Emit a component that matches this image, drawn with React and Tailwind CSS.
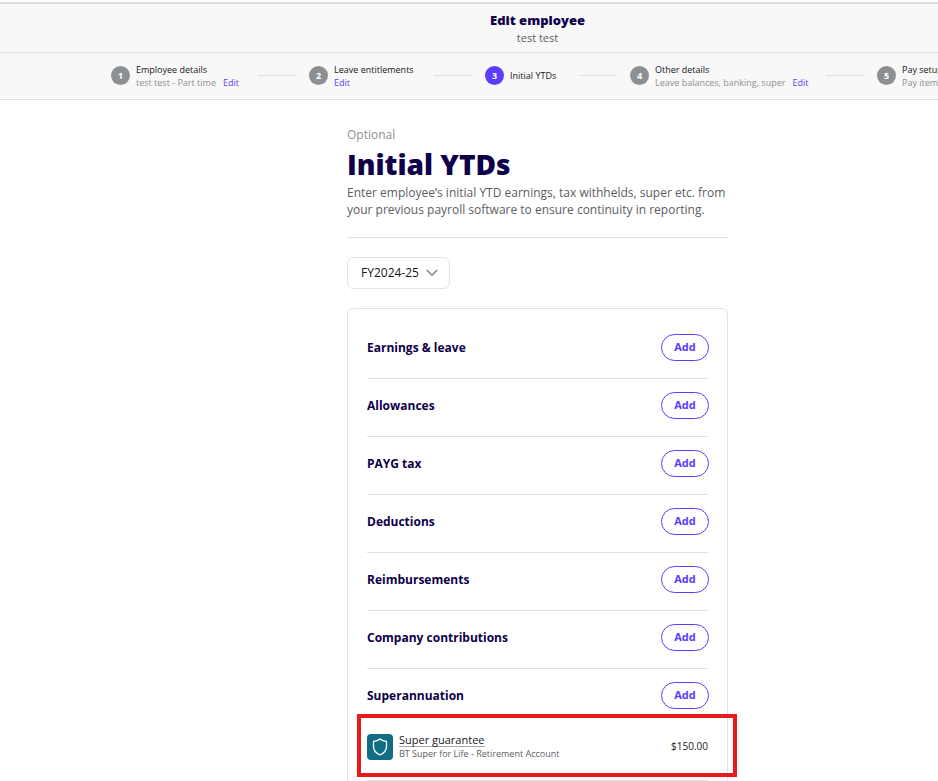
import React, { useState } from 'react';
import clsx from 'clsx';

const steps = [
  { title: 'Employee details', subtitle: 'test test - Part time', editable: true, width: 'w-[103px]' },
  { title: 'Leave entitlements', editable: true, width: 'w-[81px]' },
  { title: 'Initial YTDs', current: true, width: 'w-[50px]' },
  { title: 'Other details', subtitle: 'Leave balances, banking, super', editable: true, width: 'w-[152px]' },
  { title: 'Pay setup', subtitle: 'Pay items', width: 'w-[104px]' },
];

const sections = [
  { name: 'Earnings & leave' },
  { name: 'Allowances' },
  { name: 'PAYG tax' },
  { name: 'Deductions' },
  { name: 'Reimbursements' },
  { name: 'Company contributions' },
  {
    name: 'Superannuation',
    items: [{ name: 'Super guarantee', detail: 'BT Super for Life - Retirement Account', amount: '$150.00' }],
  },
];

const Header = () => (
  <header className="mt-[2px] flex h-[51px] flex-col items-center border-t-2 border-b border-[#e0e0e0] bg-[#f8f8f8] pt-[7px] pl-[137px]">
    <div className="text-[13px] leading-[18px] font-extrabold text-[#0e0049]">Edit employee</div>
    <div className="text-[11px] leading-[17px] text-[#5b5e62]">test test</div>
  </header>
);

const Step = ({ step, number }) => (
  <li className="flex shrink-0 items-center">
    {number > 1 && <span className="mr-[13px] ml-[19px] h-px w-[38px] bg-[#e0e0e0]" />}
    <span
      className={clsx(
        'flex size-[19px] items-center justify-center rounded-full text-[9px] font-bold text-white',
        step.current ? 'bg-[#5c3dff]' : 'bg-[#8d9093]'
      )}
    >
      {number}
    </span>
    <div className={clsx('ml-[6px] text-[9px] leading-[13px] whitespace-nowrap', step.width)}>
      <div className="font-medium text-[#17171c]">{step.title}</div>
      {(step.subtitle || step.editable) && (
        <div className="flex gap-[7px] text-[#8d9093]">
          {step.subtitle && <span>{step.subtitle}</span>}
          {step.editable && (
            <a href="#" className="text-[#5c3dff]">
              Edit
            </a>
          )}
        </div>
      )}
    </div>
  </li>
);

const Stepper = () => (
  <nav className="overflow-hidden border-b border-[#e0e0e0] bg-[#f8f8f8]">
    <ol className="flex h-[46px] items-center pb-px pl-[111px]">
      {steps.map((step, i) => (
        <Step key={step.title} step={step} number={i + 1} />
      ))}
    </ol>
  </nav>
);

const YearSelect = () => {
  const [year, setYear] = useState('FY2024-25');

  return (
    <div className="relative mt-[19px] w-[103px]">
      <select
        aria-label="Financial year"
        className="h-8 w-full appearance-none rounded-md border border-[#e3e3e5] bg-white pl-[13px] text-[12px] text-[#17171c]"
        value={year}
        onChange={e => setYear(e.target.value)}
      >
        <option>FY2024-25</option>
        <option>FY2023-24</option>
      </select>
      <svg
        className="pointer-events-none absolute top-[12px] right-[12px] h-2 w-3"
        viewBox="0 0 12 8"
        fill="none"
        stroke="#85888c"
        strokeWidth="1.6"
      >
        <path d="M0.8 1 6 6.2 11.2 1" />
      </svg>
    </div>
  );
};

const Item = ({ item }) => (
  <div className="relative flex h-[72px] items-center border-b border-[#e0e0e0] pt-1">
    <span className="flex size-[26px] shrink-0 items-center justify-center rounded-[4px] bg-[#116d83]">
      <svg className="h-[18px] w-4" viewBox="0 0 16 18" fill="none" stroke="white" strokeWidth="1.3" strokeLinejoin="round">
        <path d="M8 1C6.2 2.6 4.1 3.3 1.5 3.4V8.6C1.5 12.5 4.1 15.4 8 17C11.9 15.4 14.5 12.5 14.5 8.6V3.4C11.9 3.3 9.8 2.6 8 1Z" />
      </svg>
    </span>
    <div className="ml-[6px] flex-1">
      <a href="#" className="block w-fit border-b border-[#a5a7aa] text-[11px] leading-[13px] text-[#17171c]">
        {item.name}
      </a>
      <div className="text-[9px] leading-[13px] text-[#5b5e62]">{item.detail}</div>
    </div>
    <div className="text-[10px] font-medium text-[#17171c]">{item.amount}</div>
    <div className="pointer-events-none absolute top-[5px] -right-[29px] -left-[10px] h-[63px] border-4 border-[#e81a1c]" />
  </div>
);

const Section = ({ section }) => (
  <section>
    <div className={clsx('flex items-center justify-between pt-[13px]', !section.items && 'border-b border-[#e0e0e0] pb-[17px]')}>
      <h2 className="text-[12px] font-bold text-[#0e0049]">{section.name}</h2>
      <button
        type="button"
        className="-mr-px h-[27px] w-12 rounded-full border border-[#5c3dff] text-[11px] font-bold text-[#5c3dff]"
      >
        Add
      </button>
    </div>
    {section.items?.map(item => (
      <Item key={item.name} item={item} />
    ))}
  </section>
);

export default function App() {
  return (
    <div className="h-screen overflow-hidden bg-white font-['Open_Sans','Noto_Sans',sans-serif]">
      <Header />
      <Stepper />
      <div className="pl-[137px]">
        <main className="mx-auto mt-[26px] w-[381px]">
          <div className="text-[12px] leading-[17px] text-[#8d9093]">Optional</div>
          <h1 className="mt-[3px] mb-[2px] text-[28px] leading-[36px] font-extrabold text-[#0e0049]">Initial YTDs</h1>
          <p className="text-[12px] leading-[17px] text-[#5b5e62]">
            Enter employee’s initial YTD earnings, tax withhelds, super etc. from your previous payroll software to
            ensure continuity in reporting.
          </p>
          <hr className="mt-[19px] border-[#e0e0e0]" />
          <YearSelect />
          <div className="mt-[19px] rounded-md border border-[#e3e3e5] px-[19px] pt-3 pb-5">
            {sections.map(section => (
              <Section key={section.name} section={section} />
            ))}
          </div>
        </main>
      </div>
    </div>
  );
}
